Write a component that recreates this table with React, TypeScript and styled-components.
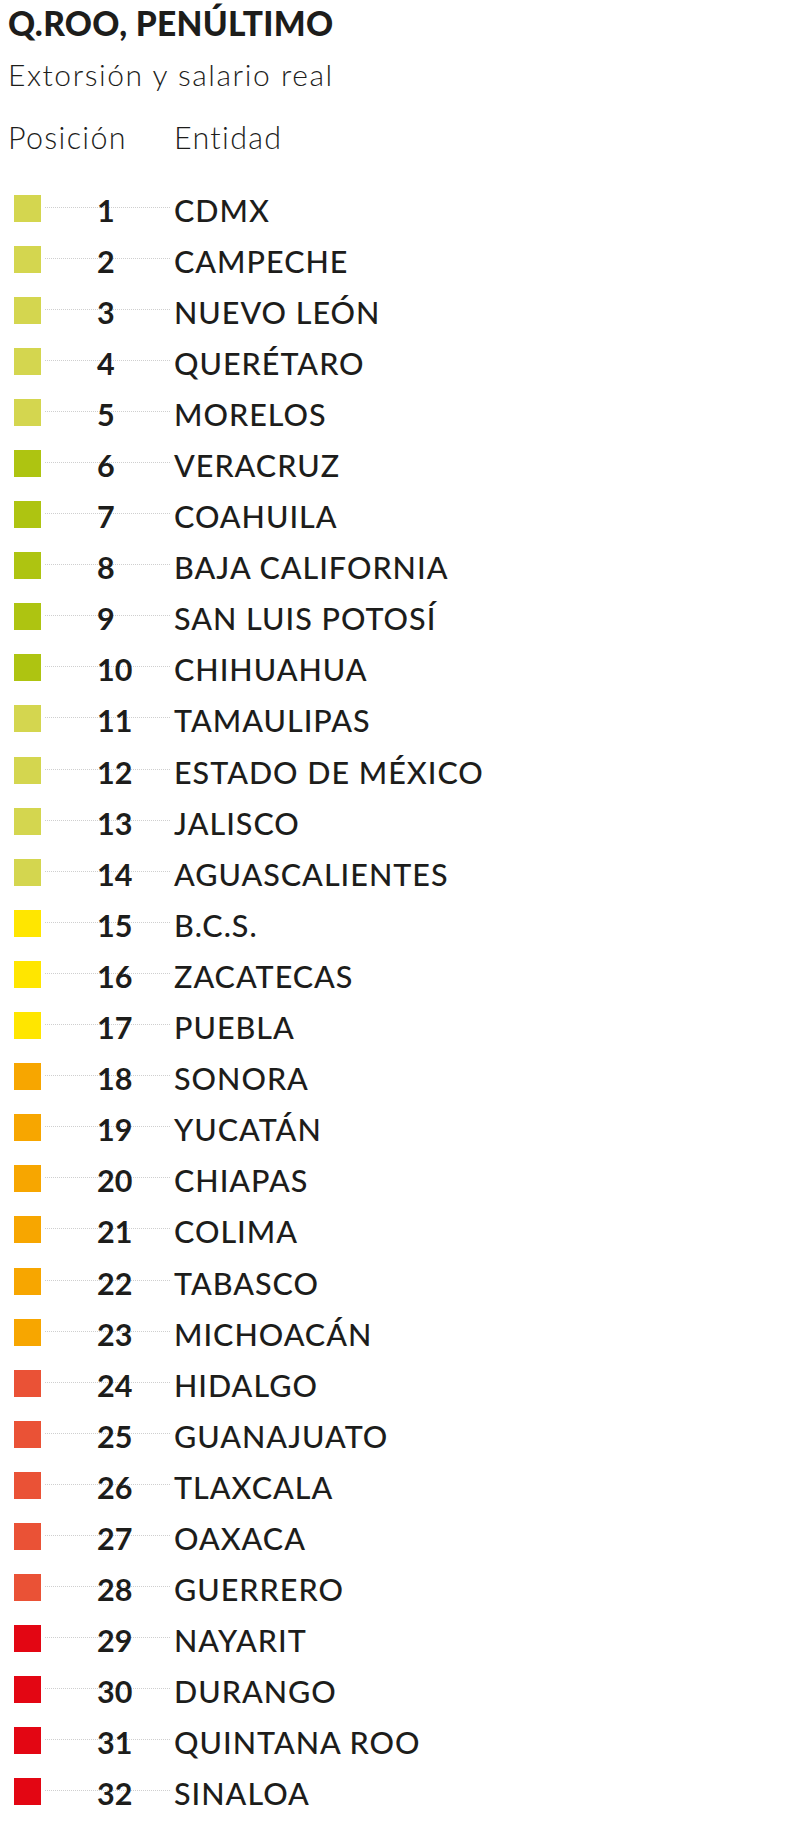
import React from "react"
import styled, { createGlobalStyle } from "styled-components"

const GlobalStyle = createGlobalStyle`
  html, body {
    margin: 0;
    padding: 0;
    background: #ffffff;
  }
  body {
    font-family: Lato, "Open Sans", sans-serif;
    color: #1d1d1b;
  }
`

const tones = {
  lime: "#d4d64f",
  olive: "#aec411",
  yellow: "#ffe600",
  orange: "#f7a600",
  coral: "#ea5236",
  red: "#e30613",
}

type Tone = keyof typeof tones

const states: [string, Tone][] = [
  ["CDMX", "lime"],
  ["CAMPECHE", "lime"],
  ["NUEVO LEÓN", "lime"],
  ["QUERÉTARO", "lime"],
  ["MORELOS", "lime"],
  ["VERACRUZ", "olive"],
  ["COAHUILA", "olive"],
  ["BAJA CALIFORNIA", "olive"],
  ["SAN LUIS POTOSÍ", "olive"],
  ["CHIHUAHUA", "olive"],
  ["TAMAULIPAS", "lime"],
  ["ESTADO DE MÉXICO", "lime"],
  ["JALISCO", "lime"],
  ["AGUASCALIENTES", "lime"],
  ["B.C.S.", "yellow"],
  ["ZACATECAS", "yellow"],
  ["PUEBLA", "yellow"],
  ["SONORA", "orange"],
  ["YUCATÁN", "orange"],
  ["CHIAPAS", "orange"],
  ["COLIMA", "orange"],
  ["TABASCO", "orange"],
  ["MICHOACÁN", "orange"],
  ["HIDALGO", "coral"],
  ["GUANAJUATO", "coral"],
  ["TLAXCALA", "coral"],
  ["OAXACA", "coral"],
  ["GUERRERO", "coral"],
  ["NAYARIT", "red"],
  ["DURANGO", "red"],
  ["QUINTANA ROO", "red"],
  ["SINALOA", "red"],
]

const Page = styled.div`
  width: 800px;
  min-height: 1847px;
  padding: 3px 0 0 8px;
  box-sizing: border-box;
`

const Title = styled.h1`
  margin: 0;
  font-size: 33.5px;
  line-height: 40px;
  font-weight: 900;
  letter-spacing: 0.3px;
`

const Subtitle = styled.div`
  margin-top: 14px;
  font-size: 30px;
  line-height: 34px;
  font-weight: 300;
  letter-spacing: 1.55px;
`

const ColumnHeads = styled.div`
  display: flex;
  margin-top: 29px;
  font-size: 30.5px;
  line-height: 34px;
  font-weight: 300;
  letter-spacing: 1.3px;
`

const HeadCell = styled.span<{ $width?: number }>`
  flex: 0 0 ${(p) => (p.$width ? `${p.$width}px` : "auto")};
`

const List = styled.div`
  margin-top: 28.5px;
  display: flex;
  flex-direction: column;
`

const Row = styled.div`
  display: flex;
  align-items: center;
  height: 51.1px;
`

const Swatch = styled.span<{ $tone: Tone }>`
  flex: 0 0 27px;
  height: 27px;
  margin-left: 6px;
  background: ${(p) => tones[p.$tone]};
`

const Leader = styled.span`
  flex: 0 0 133px;
  display: flex;
  align-items: center;
  padding: 0 4px;
  box-sizing: border-box;
  background-image: linear-gradient(to right, #cfcfcf 50%, transparent 50%);
  background-size: 2px 1px;
  background-repeat: repeat-x;
  background-position: 0 calc(50% - 1px);
  background-origin: content-box;
  background-clip: content-box;
`

const Rank = styled.span`
  margin-left: 52px;
  padding-top: 3px;
  font-size: 30.5px;
  line-height: 36px;
  font-weight: 700;
`

const Name = styled.span`
  padding-top: 3px;
  font-size: 30.5px;
  line-height: 36px;
  font-weight: 500;
  letter-spacing: 1px;
  white-space: nowrap;
`

export default function App() {
  return (
    <>
      <GlobalStyle />
      <Page>
        <Title>Q.ROO, PENÚLTIMO</Title>
        <Subtitle>Extorsión y salario real</Subtitle>
        <ColumnHeads>
          <HeadCell $width={166}>Posición</HeadCell>
          <HeadCell>Entidad</HeadCell>
        </ColumnHeads>
        <List>
          {states.map(([name, tone], i) => (
            <Row key={name}>
              <Swatch $tone={tone} />
              <Leader>
                <Rank>{i + 1}</Rank>
              </Leader>
              <Name>{name}</Name>
            </Row>
          ))}
        </List>
      </Page>
    </>
  )
}
